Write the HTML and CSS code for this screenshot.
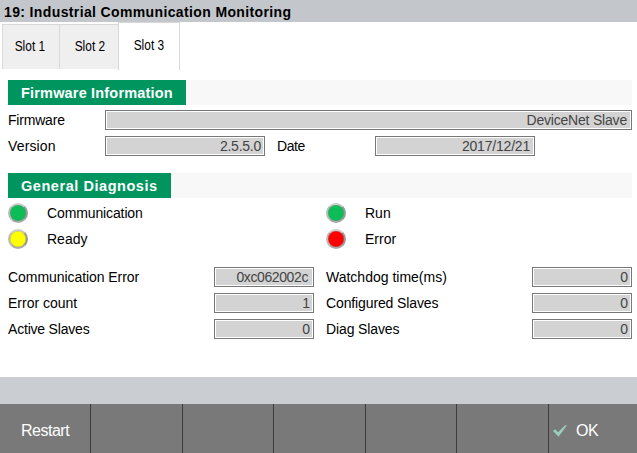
FILE: index.html
```
<!DOCTYPE html>
<html lang="en">
<head>
<meta charset="utf-8">
<title>Industrial Communication Monitoring</title>
<link rel="stylesheet" href="styles.css">
</head>
<body>
<header class="titlebar"><span class="title">19: Industrial Communication Monitoring</span></header>
<nav class="tabs">
  <div class="tab tab-first"><span>Slot 1</span></div>
  <div class="tab tab-second"><span>Slot 2</span></div>
  <div class="tab tab-active"><span>Slot 3</span></div>
</nav>
<main class="content">
  <h2 class="section"><span class="section-label firmware-label">Firmware Information</span></h2>
  <div class="firmware-grid">
    <span class="label firmware">Firmware</span><span class="field wide"><span class="value device">DeviceNet Slave</span></span>
    <span class="label version">Version</span><span class="field"><span class="value version-value">2.5.5.0</span></span>
    <span class="label date">Date</span><span class="field"><span class="value date-value">2017/12/21</span></span>
  </div>
  <h2 class="section"><span class="section-label diagnosis-label">General Diagnosis</span></h2>
  <div class="status-grid">
    <div class="status"><i class="led green"></i><span class="label communication">Communication</span></div>
    <div class="status"><i class="led green"></i><span class="label">Run</span></div>
    <div class="status"><i class="led yellow"></i><span class="label">Ready</span></div>
    <div class="status"><i class="led red"></i><span class="label">Error</span></div>
  </div>
  <div class="counter-grid">
    <span class="label comm-error">Communication Error</span><span class="field"><span class="value hex">0xc062002c</span></span>
    <span class="label watchdog">Watchdog time(ms)</span><span class="field"><span class="value">0</span></span>
    <span class="label error-count">Error count</span><span class="field"><span class="value">1</span></span>
    <span class="label configured">Configured Slaves</span><span class="field"><span class="value">0</span></span>
    <span class="label active-slaves">Active Slaves</span><span class="field"><span class="value">0</span></span>
    <span class="label diag">Diag Slaves</span><span class="field"><span class="value">0</span></span>
  </div>
</main>
<div class="statusbar"></div>
<footer class="keys">
  <div class="key restart">Restart</div>
  <div class="key"></div>
  <div class="key"></div>
  <div class="key"></div>
  <div class="key"></div>
  <div class="key"></div>
  <div class="key ok"><svg class="check" viewBox="0 0 14 12" width="14" height="12"><path d="M0 6 2.2 4.3 5 7.2 12.2 0.2 14 0.2 5.5 11.8Z"/></svg><span>OK</span></div>
</footer>
</body>
</html>
```

FILE: styles.css
```
* { box-sizing: border-box; }

body {
  margin: 0;
  width: 637px;
  height: 453px;
  display: flex;
  flex-direction: column;
  overflow: hidden;
  background: #fff;
  color: #000;
  font: 14px/20px "Liberation Sans", Arial, sans-serif;
  white-space: nowrap;
}

.titlebar {
  height: 22px;
  padding: 2px 0 0 4px;
  background: #c3c7cb;
  font-weight: bold;
}
.title { letter-spacing: 0.37px; }

.tabs { display: flex; height: 48px; padding-left: 2px; align-items: flex-start; }
.tab {
  height: 45px;
  margin-top: 2px;
  padding-top: 11px;
  border: 1px solid #d8d8d8;
  border-bottom: 0;
  border-right: 0;
  background: #efefef;
  text-align: center;
  line-height: 20px;
}
.tab span { display: inline-block; transform: scaleX(0.85); }
.tab-first { width: 57px; padding-right: 3px; }
.tab-second { width: 59px; padding-left: 1px; }
.tab-active {
  width: 62px;
  height: 48px;
  margin-top: 0;
  padding-top: 12px;
  border-right: 1px solid #d8d8d8;
  background: #fff;
}

.content { height: 307px; padding: 10px 5px 0 8px; }
.section {
  display: flex;
  height: 25px;
  margin: 0;
  background: #f8f8f8;
  font-size: 14.5px;
  line-height: 26px;
}
.section-label { padding-left: 13px; background: #00945e; color: #fff; }
.firmware-label { width: 178px; letter-spacing: 0.18px; }
.diagnosis-label { width: 163px; letter-spacing: 0.55px; }

.firmware-grid {
  display: grid;
  grid-template-columns: 97px 160px 12px 98px 160px;
  grid-auto-rows: 20px;
  row-gap: 6px;
  margin: 5px 0 17px;
}
.wide { grid-column: 2 / -1; width: 527px; }
.date { grid-column: 4; letter-spacing: -0.4px; }
.firmware, .active-slaves { letter-spacing: -0.2px; }
.communication, .configured, .diag { letter-spacing: -0.12px; }
.version { letter-spacing: 0.15px; }
.comm-error { letter-spacing: -0.06px; }

.field {
  height: 20px;
  padding-right: 3px;
  border: 1px solid #777;
  box-shadow: inset 0 0 0 1px #fff;
  background: #d3d3d3;
  color: #444;
  text-align: right;
  line-height: 19px;
}
.device { letter-spacing: -0.2px; margin-right: 1px; }
.version-value { letter-spacing: -0.25px; }
.date-value { letter-spacing: -0.2px; margin-right: 1px; }
.hex { letter-spacing: -0.4px; margin-right: 2px; }

.status-grid {
  display: grid;
  grid-template-columns: 318px 1fr;
  grid-auto-rows: 20px;
  row-gap: 6px;
  margin: 5px 0 18px;
}
.status { display: flex; gap: 19px; }
.led {
  width: 20px;
  height: 20px;
  border: 2px solid;
  border-color: #ccc #999 #aaa #bbb;
  border-radius: 50%;
  box-shadow: inset 0 0 0 0.5px #8888;
}
.green { background: #0bbc57; }
.yellow { background: #ff0; }
.red { background: #f00; }

.counter-grid {
  display: grid;
  grid-template-columns: 206px 100px 12px 206px 100px;
  grid-auto-rows: 20px;
  row-gap: 6px;
}
.watchdog, .configured, .diag { grid-column: 4; }

.statusbar { height: 27px; background: #cacdd2; }
.keys {
  display: grid;
  grid-template-columns: 91px 92px 91px 92px 91px 92px 88px;
  height: 49px;
  background: #797979;
  color: #fff;
  font-size: 16px;
}
.key { display: flex; align-items: center; padding-top: 4px; border-right: 1px solid #3c3c3c; }
.key:last-child { border-right: 0; }
.restart { padding-left: 21px; letter-spacing: -0.5px; }
.ok { padding-left: 4px; gap: 9px; letter-spacing: -0.5px; }
.check { fill: #9bcdbb; }
```
